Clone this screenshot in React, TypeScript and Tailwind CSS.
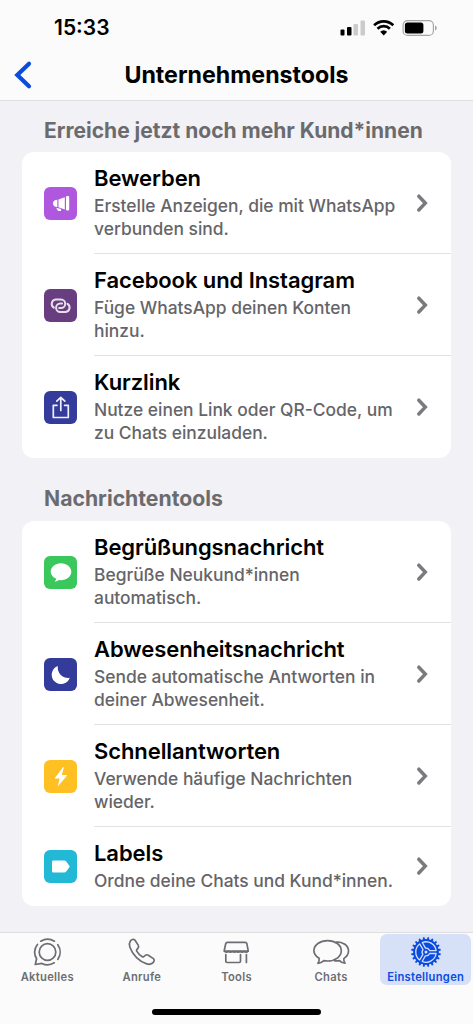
import React from "react";

interface Tool {
  title: string;
  lines: string[];
  color: string;
  icon: React.ReactNode;
}

interface Tab {
  label: string;
  icon: React.ReactNode;
  active?: boolean;
}

const MegaphoneIcon = () => (
  <svg width="33" height="33" viewBox="0 0 33 33" fill="white">
    <path d="M13.300 12.800v7.200c-2.500 0-4.300-1.300-4.300-3.600s1.800-3.600 4.300-3.600Z" />
    <path d="M14.500 12.600 20.800 10.300v12.200l-6.300-2.200Z" />
    <rect x="22" y="9" width="3.200" height="14.500" rx="1" />
    <path d="m12.200 20.800 4.800 1.200v2h-3Z" />
  </svg>
);

const LinkIcon = () => (
  <svg width="33" height="33" viewBox="0 0 33 33" fill="none" stroke="#e6dfe9" strokeWidth="2" strokeLinecap="round">
    <path d="M9.800 18.700A4.400 4.400 0 0 1 11.600 10.600h5.400a4.200 4.200 0 0 1 0 8.400h-1.800" />
    <path d="M23.500 14.800a4.400 4.400 0 0 1-1.800 8.100h-5.400a4.200 4.200 0 0 1 0-8.400h1.800" />
  </svg>
);

const ShareIcon = () => (
  <svg width="33" height="33" viewBox="0 0 33 33" fill="none" stroke="#f0f0fa" strokeWidth="1.700" strokeLinecap="round" strokeLinejoin="round">
    <path d="M13 14.300H9.300v12.200h15V14.300h-3.700" />
    <path d="M16.800 19.500V6.700M12.800 10.200l4-3.900 4 3.900" />
  </svg>
);

const BubbleIcon = () => (
  <svg width="33" height="33" viewBox="0 0 33 33" fill="white">
    <path d="M17 7.200c5.700 0 10.300 3.800 10.300 8.500s-4.600 8.500-10.300 8.500c-.7 0-1.300 0-1.900-.2-1.200.9-2.800 1.500-4.400 1.600.9-.8 1.300-1.800 1.300-3-3.200-1.400-5.300-4-5.300-6.900 0-4.700 4.600-8.500 10.300-8.500Z" />
  </svg>
);

const MoonIcon = () => (
  <svg width="33" height="33" viewBox="0 0 33 33" fill="white">
    <path d="M13.900 8A10.200 10.200 0 0 0 25.800 19.800 9.300 9.300 0 1 1 13.900 8Z" />
  </svg>
);

const BoltIcon = () => (
  <svg width="33" height="33" viewBox="0 0 33 33" fill="white">
    <path d="M19 7.300 11 17.700c-.3.400-.1.700.3.700h4.300l-1.900 8.200 9-10.700c.3-.4.100-.8-.3-.8h-4.700l2.100-7.300c.1-.6-.5-.9-.8-.5Z" />
  </svg>
);

const LabelIcon = () => (
  <svg width="33" height="33" viewBox="0 0 33 33" fill="white">
    <path d="M9.300 10.500h10.800c1 0 1.700.4 2.300 1.200l3.400 4.800-3.400 4.800c-.6.800-1.300 1.200-2.300 1.200H9.300a1.300 1.300 0 0 1-1.300-1.300v-9.400c0-.7.600-1.300 1.300-1.300Z" />
  </svg>
);

const Chevron = () => (
  <svg width="12" height="20" viewBox="0 0 12 20" className="shrink-0" fill="none" stroke="#7b7b7f" strokeWidth="3.500" strokeLinecap="round" strokeLinejoin="miter">
    <path d="m2.800 3.200 6.500 6.900-6.500 6.900" />
  </svg>
);

const UpdatesIcon = () => (
  <svg width="30" height="30" viewBox="0 0 30 30" fill="none" stroke="#6d6d72" strokeWidth="1.700" strokeLinecap="round" strokeLinejoin="round">
    <circle cx="15.500" cy="15" r="8.300" />
    <path d="M8.800 4.200a12.700 12.700 0 0 1 13.600 0M25.800 7.700a12.700 12.700 0 0 1 0 14.700M22.200 25.800a12.700 12.700 0 0 1-12.300.6l-6.600 1.100 1.300-5.800M4.600 21.700A12.700 12.700 0 0 1 5.400 7.500" />
  </svg>
);

const PhoneIcon = () => (
  <svg width="30" height="30" viewBox="0 0 30 30" fill="none" stroke="#6d6d72" strokeWidth="1.700" strokeLinejoin="round">
    <path d="M3.200 4.300C4.300 2.500 6.400 1.600 7.900 3l3.300 5.100c.7 1.100.6 2.200-.4 3.300l-1 1.200c-.4.500-.4 1-.1 1.500 1.300 2.300 3.300 4.200 5.600 5.600.5.300 1 .3 1.500-.1l1.200-1c1.100-1 2.200-1.100 3.300-.4l5.100 3.400c1.400 1.400.7 3.500-1.100 4.700-1.500 1-3.600 1.200-5.500.6C12.400 24.600 5.500 17.800 2.900 10.300c-.7-2-.7-4.400.3-6Z" />
  </svg>
);

const StoreIcon = () => (
  <svg width="30" height="30" viewBox="0 0 30 30" fill="none" stroke="#6d6d72" strokeWidth="1.700" strokeLinejoin="round" strokeLinecap="round">
    <path d="M6.300 5.300h17.900c.9 0 1.500.6 1.700 1.500l1.200 6.400v1H3.300v-1l1.400-6.400c.2-.9.700-1.500 1.600-1.500Z" />
    <path d="M3.500 14.200c.3 1.500 3.200 1.500 3.900 0 .7 1.500 3.200 1.500 3.900 0 .7 1.500 3.200 1.500 3.900 0 .7 1.500 3.200 1.500 3.900 0 .7 1.500 3.200 1.500 3.900 0 .7 1.500 3.500 1.500 3.900 0" strokeWidth="1.400" />
    <path d="M4.800 17.500v6.700c0 .8.500 1.300 1.300 1.300h12.100c.8 0 1.300-.5 1.300-1.300v-6.700M25.400 17.500v8" />
  </svg>
);

const ChatsIcon = () => (
  <svg width="38" height="30" viewBox="0 0 38 30" fill="none" stroke="#6d6d72" strokeWidth="1.700" strokeLinejoin="round">
    <path d="M15.600 3.600c7.700 0 13.700 4.400 13.700 10.200S23.300 24 15.600 24c-1.300 0-2.600-.1-3.700-.4-1.700 1.600-3.600 2.500-6 2.700 1.200-1.400 1.500-3.200 1.200-5C4 19.400 1.900 16.700 1.900 13.800 1.900 8 7.900 3.600 15.600 3.600Z" />
    <path d="M24.200 4.800c6.700 0 12.300 3.500 12.300 9.300 0 3.200-2 5.800-4.700 7.500-.2 1.700.2 3.400 1.300 4.600-2.300-.1-4.200-1-5.600-2.600-1.700.4-3.700.4-5.500.1" />
  </svg>
);

const teeth = Array.from({ length: 20 }, (_, i) => i * 18);

const SettingsIcon = () => (
  <svg width="32" height="32" viewBox="0 0 32 32" fill="none">
    <g stroke="#0a4be0" strokeWidth="2" strokeLinecap="round">
      {teeth.map((angle) => (
        <path key={angle} d="M16 2v3" transform={`rotate(${angle + 9} 16 16)`} />
      ))}
    </g>
    <circle cx="16" cy="16" r="12.900" fill="#0a4be0" />
    {[0, 120, 240].map((angle) => (
      <path
        key={angle}
        d="M19.600 17.500h6.500A10.200 10.200 0 0 1 12.200 25.500l3.200-5.700a3.900 3.900 0 0 0 4.200-2.300Z"
        stroke="#d6e0f7"
        strokeWidth="1.300"
        strokeLinejoin="round"
        transform={`rotate(${angle} 16 16)`}
      />
    ))}
    <circle cx="16" cy="16" r="1.500" fill="#d6e0f7" />
  </svg>
);

const reachTools: Tool[] = [
  { title: "Bewerben", lines: ["Erstelle Anzeigen, die mit WhatsApp", "verbunden sind."], color: "bg-[#af57de]", icon: <MegaphoneIcon /> },
  { title: "Facebook und Instagram", lines: ["Füge WhatsApp deinen Konten", "hinzu."], color: "bg-[#693e80]", icon: <LinkIcon /> },
  { title: "Kurzlink", lines: ["Nutze einen Link oder QR-Code, um", "zu Chats einzuladen."], color: "bg-[#343c9b]", icon: <ShareIcon /> },
];

const messageTools: Tool[] = [
  { title: "Begrüßungsnachricht", lines: ["Begrüße Neukund*innen", "automatisch."], color: "bg-[#3ac75b]", icon: <BubbleIcon /> },
  { title: "Abwesenheitsnachricht", lines: ["Sende automatische Antworten in", "deiner Abwesenheit."], color: "bg-[#343c9b]", icon: <MoonIcon /> },
  { title: "Schnellantworten", lines: ["Verwende häufige Nachrichten", "wieder."], color: "bg-[#ffc024]", icon: <BoltIcon /> },
  { title: "Labels", lines: ["Ordne deine Chats und Kund*innen."], color: "bg-[#22b9d7]", icon: <LabelIcon /> },
];

const tabs: Tab[] = [
  { label: "Aktuelles", icon: <UpdatesIcon /> },
  { label: "Anrufe", icon: <PhoneIcon /> },
  { label: "Tools", icon: <StoreIcon /> },
  { label: "Chats", icon: <ChatsIcon /> },
  { label: "Einstellungen", icon: <SettingsIcon />, active: true },
];

function StatusBar() {
  return (
    <div className="flex h-14 items-center justify-between pl-[54px] pr-[35px]">
      <span className="text-[21px] leading-7 font-semibold text-black">15:33</span>
      <svg width="98" height="18" viewBox="0 0 98 18">
        <rect x="0.500" y="10.500" width="4" height="6" rx="1" />
        <rect x="7" y="8" width="4.500" height="8.500" rx="1" />
        <rect x="13.500" y="5" width="4.500" height="11.500" rx="1" fill="#cbcbcb" />
        <rect x="20.500" y="1.500" width="4.500" height="15" rx="1" fill="#cbcbcb" />
        <g fill="none" stroke="black" strokeWidth="2.700">
          <path d="M34.100 6.200a13.800 13.800 0 0 1 19.200 0" />
          <path d="M37.500 9.700a9 9 0 0 1 12.400 0" />
        </g>
        <path d="M40.200 12.700a5.300 5.300 0 0 1 7 0L43.700 16.500Z" />
        <rect x="63.100" y="1.600" width="30.300" height="14.800" rx="4.500" fill="none" stroke="#a5a5a5" strokeWidth="1.200" />
        <rect x="64.900" y="3.500" width="18.500" height="11" rx="2.500" />
        <path d="M95 6.500c2.400.8 2.400 4.200 0 5Z" fill="#a5a5a5" />
      </svg>
    </div>
  );
}

function ToolRow({ tool, last }: { tool: Tool; last: boolean }) {
  return (
    <div className="flex items-center pl-[22px]">
      <div className={`mr-[17px] h-[33px] w-[33px] shrink-0 overflow-hidden rounded-[6px] ${tool.color}`}>{tool.icon}</div>
      <div className={`flex flex-1 items-center justify-between pt-3 pr-[23px] ${last ? "pb-[13px]" : "border-b border-[#e2e2e4] pb-3"}`}>
        <div>
          <h3 className="text-[22px] leading-7 font-semibold tracking-[-0.08px] whitespace-nowrap text-black">{tool.title}</h3>
          <p className="mt-[2px] mb-px text-[17.4px] leading-[23px] font-medium whitespace-nowrap text-[#656569]">
            {tool.lines.map((line) => (
              <span key={line} className="block">{line}</span>
            ))}
          </p>
        </div>
        <Chevron />
      </div>
    </div>
  );
}

function ToolCard({ tools }: { tools: Tool[] }) {
  return (
    <div className="mx-[22px] overflow-hidden rounded-xl bg-white">
      {tools.map((tool, i) => (
        <ToolRow key={tool.title} tool={tool} last={i === tools.length - 1} />
      ))}
    </div>
  );
}

export default function App() {
  return (
    <div className="flex h-[1024px] w-[473px] flex-col overflow-hidden bg-[#f2f1f6] font-['Inter',sans-serif]">
      <header className="h-[101px] shrink-0 border-b border-[#dededf] bg-[#fbfbfb]">
        <StatusBar />
        <div className="grid h-[38px] grid-cols-[60px_1fr_60px] items-center">
          <button className="pl-3.5">
            <svg width="20" height="30" viewBox="0 0 20 30" fill="none" stroke="#0a4be0" strokeWidth="4.200" strokeLinecap="round">
              <path d="M15 3.800 3.300 15l11.700 11.300" />
            </svg>
          </button>
          <h1 className="text-center text-[23.2px] leading-7 font-bold whitespace-nowrap text-black">Unternehmenstools</h1>
        </div>
      </header>

      <main className="flex-1">
        <h2 className="px-[44px] pt-[16px] pb-[7px] text-[21px] leading-7 font-bold whitespace-nowrap text-[#6b6b6e]">Erreiche jetzt noch mehr Kund*innen</h2>
        <ToolCard tools={reachTools} />
        <h2 className="px-[44px] pt-[26px] pb-[9px] text-[21.2px] leading-7 font-bold whitespace-nowrap text-[#6b6b6e]">Nachrichtentools</h2>
        <ToolCard tools={messageTools} />
      </main>

      <footer className="flex h-[92px] shrink-0 flex-col items-center border-t border-[#dededf] bg-[#fbfbfb]">
        <nav className="grid w-full grid-cols-5 pt-px">
          {tabs.map((tab) => (
            <button
              key={tab.label}
              className={`mx-[2px] flex h-[51px] flex-col items-center rounded-[7px] pt-px ${tab.active ? "bg-[#d6e0f7] text-[#0a4be0]" : "text-[#6d6d72]"}`}
            >
              <span className="mt-px flex h-9 items-center">{tab.icon}</span>
              <span className="mt-px text-[11.2px] leading-4 font-semibold tracking-[0.3px] whitespace-nowrap">{tab.label}</span>
            </button>
          ))}
        </nav>
        <div className="mt-[24px] h-[6px] w-[169px] rounded-full bg-black" />
      </footer>
    </div>
  );
}
